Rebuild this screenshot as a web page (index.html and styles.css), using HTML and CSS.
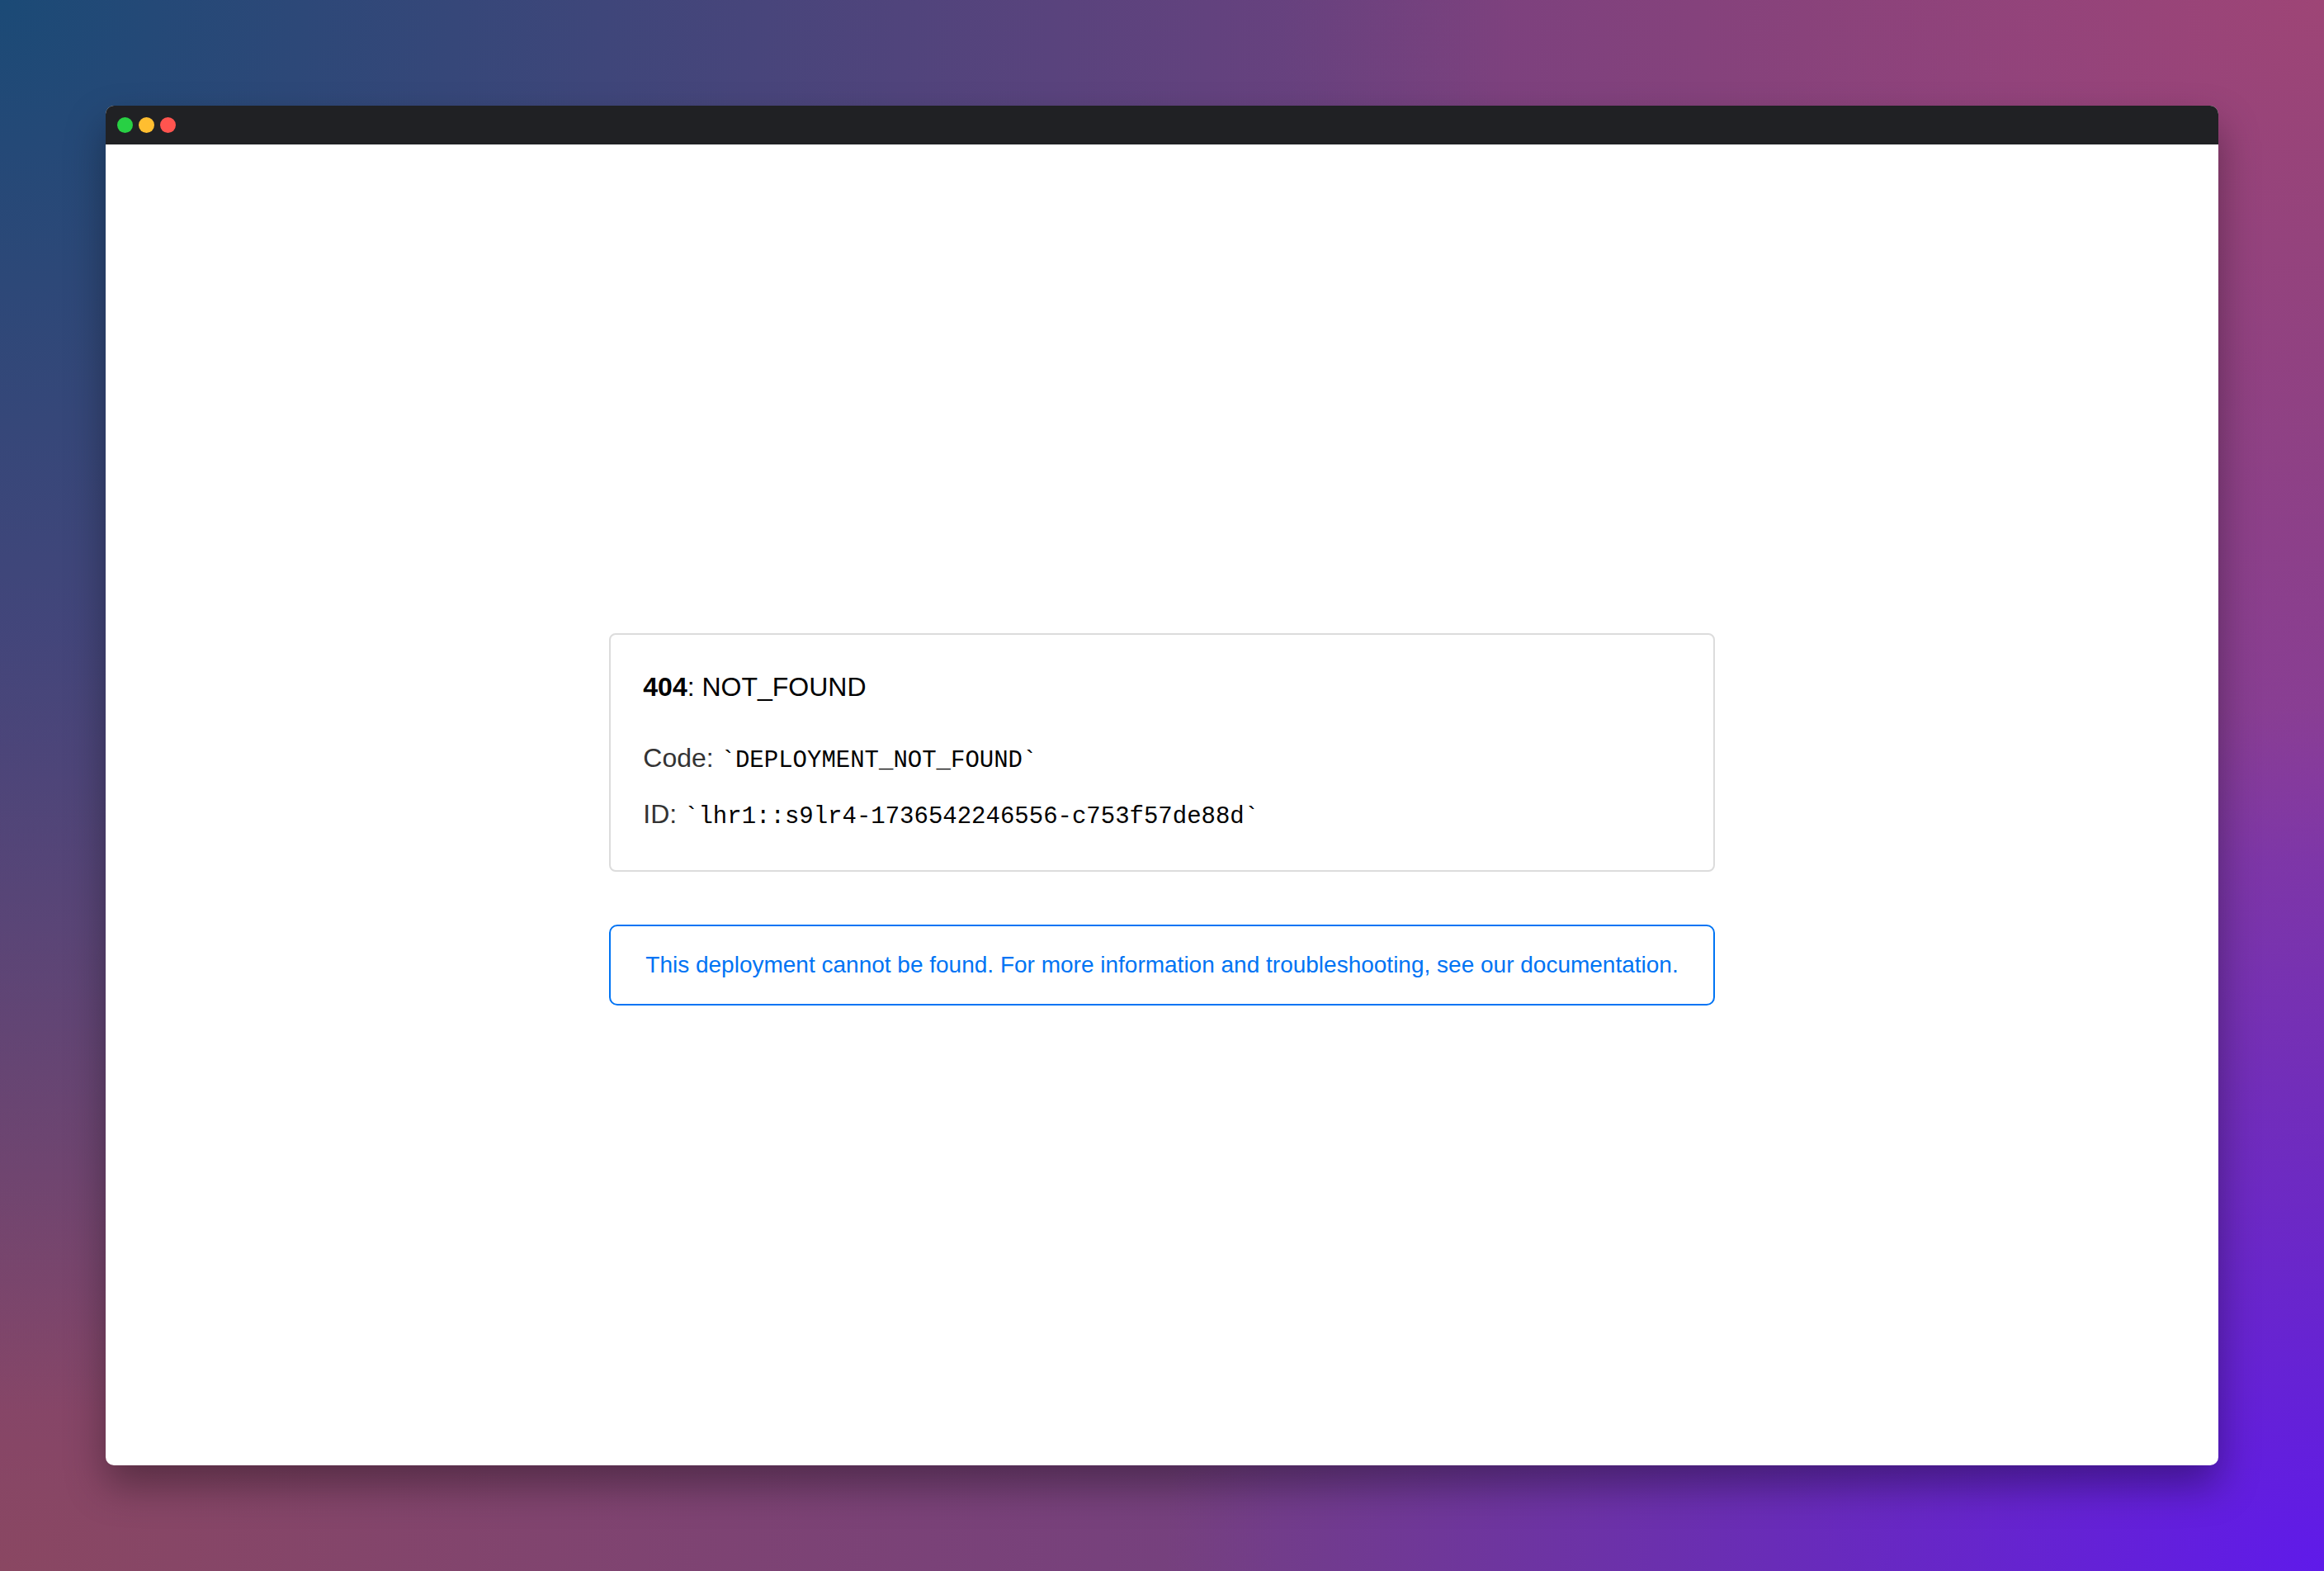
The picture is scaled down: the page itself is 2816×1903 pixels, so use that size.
FILE: index.html
```html
<!DOCTYPE html>
<html lang="en">
<head>
<meta charset="utf-8">
<meta name="viewport" content="width=device-width, initial-scale=1">
<title>404: NOT_FOUND</title>
<link rel="stylesheet" href="styles.css">
</head>
<body>
<div class="window">
  <header class="titlebar">
    <span class="dot dot-green"></span>
    <span class="dot dot-yellow"></span>
    <span class="dot dot-red"></span>
  </header>
  <main class="content">
    <div class="message">
      <section class="card">
        <h1 class="title"><strong>404</strong>: NOT_FOUND</h1>
        <p class="detail">Code: <code class="value">`DEPLOYMENT_NOT_FOUND`</code></p>
        <p class="detail">ID: <code class="value">`lhr1::s9lr4-1736542246556-c753f57de88d`</code></p>
      </section>
      <a class="note" href="#">This deployment cannot be found. For more information and troubleshooting, see our documentation.</a>
    </div>
  </main>
</div>
</body>
</html>
```

FILE: styles.css
```css
* {
  box-sizing: border-box;
}

body {
  margin: 0;
  min-height: 100vh;
  padding: 128px;
  display: flex;
  font-family: "Liberation Sans", Arial, sans-serif;
  color: #000;
  background:
    radial-gradient(ellipse 65% 90% at 0 0, #1b4a76, transparent),
    radial-gradient(ellipse 45% 55% at 100% 0, #9e4576, transparent),
    radial-gradient(ellipse 55% 60% at 0 100%, #8a4762, transparent),
    radial-gradient(ellipse 50% 55% at 100% 100%, #5f1aea, transparent),
    radial-gradient(ellipse 30% 70% at 100% 50%, #863c9c, transparent),
    #744080;
}

.window {
  flex: 1;
  display: flex;
  flex-direction: column;
  border-radius: 10px;
  overflow: hidden;
  background: #fff;
  box-shadow: 0 24px 48px rgba(0, 0, 0, 0.35);
}

.titlebar {
  display: flex;
  align-items: center;
  gap: 7px;
  height: 47px;
  padding: 0 14px;
  background: #202124;
}

.dot {
  width: 19px;
  height: 19px;
  border-radius: 50%;
}

.dot-green {
  background: #28d044;
}

.dot-yellow {
  background: #ffbe30;
}

.dot-red {
  background: #ff544f;
}

.content {
  flex: 1;
  display: flex;
  align-items: center;
  justify-content: center;
  padding: 34px 0 0;
}

.message {
  display: flex;
  flex-direction: column;
  gap: 64px;
}

.card {
  padding: 36px 39px 41px;
  border: 2px solid #dcdcdc;
  border-radius: 8px;
}

.title,
.detail {
  margin: 0;
  font-size: 32px;
  font-weight: 400;
  line-height: 54px;
}

.title {
  margin-bottom: 32px;
}

.detail {
  color: #333;
}

.detail + .detail {
  margin-top: 14px;
}

.value {
  font-family: "Liberation Mono", "Courier New", monospace;
  font-size: 29px;
  line-height: 32px;
  color: #000;
}

.note {
  padding: 32px 42px;
  border: 2px solid #0074f4;
  border-radius: 10px;
  font-size: 28px;
  line-height: 30px;
  text-align: center;
  text-decoration: none;
  color: #0074f4;
}
```
